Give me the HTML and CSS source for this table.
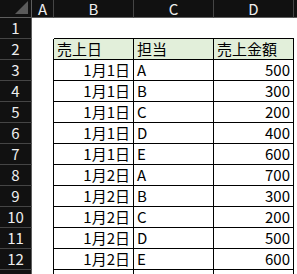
FILE: index.html
```html
<!DOCTYPE html>
<html lang="ja">
<head>
    <meta charset="UTF-8">
    <meta name="viewport" content="width=device-width, initial-scale=1.0">
    <title>売上</title>
    <link rel="stylesheet" href="styles.css">
</head>
<body>
    <div class="sheet">
        <!-- column headers -->
        <div class="corner">
            <svg width="14" height="14" viewBox="0 0 14 14"><polygon points="0,13 13,0 13,13" fill="#5a5a5a"/></svg>
        </div>
        <div class="col-head">A</div>
        <div class="col-head">B</div>
        <div class="col-head">C</div>
        <div class="col-head">D</div>
        <div class="col-head"></div>

        <!-- row 1 -->
        <div class="row-head">1</div>
        <div class="cell"></div>
        <div class="cell cap"></div>
        <div class="cell cap"></div>
        <div class="cell cap"></div>
        <div class="cell"></div>

        <!-- row 2: table header -->
        <div class="row-head">2</div>
        <div class="cell edge"></div>
        <div class="cell tb th">売上日</div>
        <div class="cell tb th">担当</div>
        <div class="cell tb th">売上金額</div>
        <div class="cell"></div>

        <div class="row-head">3</div>
        <div class="cell edge"></div>
        <div class="cell tb num">1月1日</div>
        <div class="cell tb">A</div>
        <div class="cell tb num">500</div>
        <div class="cell"></div>

        <div class="row-head">4</div>
        <div class="cell edge"></div>
        <div class="cell tb num">1月1日</div>
        <div class="cell tb">B</div>
        <div class="cell tb num">300</div>
        <div class="cell"></div>

        <div class="row-head">5</div>
        <div class="cell edge"></div>
        <div class="cell tb num">1月1日</div>
        <div class="cell tb">C</div>
        <div class="cell tb num">200</div>
        <div class="cell"></div>

        <div class="row-head">6</div>
        <div class="cell edge"></div>
        <div class="cell tb num">1月1日</div>
        <div class="cell tb">D</div>
        <div class="cell tb num">400</div>
        <div class="cell"></div>

        <div class="row-head">7</div>
        <div class="cell edge"></div>
        <div class="cell tb num">1月1日</div>
        <div class="cell tb">E</div>
        <div class="cell tb num">600</div>
        <div class="cell"></div>

        <div class="row-head">8</div>
        <div class="cell edge"></div>
        <div class="cell tb num">1月2日</div>
        <div class="cell tb">A</div>
        <div class="cell tb num">700</div>
        <div class="cell"></div>

        <div class="row-head">9</div>
        <div class="cell edge"></div>
        <div class="cell tb num">1月2日</div>
        <div class="cell tb">B</div>
        <div class="cell tb num">300</div>
        <div class="cell"></div>

        <div class="row-head">10</div>
        <div class="cell edge"></div>
        <div class="cell tb num">1月2日</div>
        <div class="cell tb">C</div>
        <div class="cell tb num">200</div>
        <div class="cell"></div>

        <div class="row-head">11</div>
        <div class="cell edge"></div>
        <div class="cell tb num">1月2日</div>
        <div class="cell tb">D</div>
        <div class="cell tb num">500</div>
        <div class="cell"></div>

        <div class="row-head">12</div>
        <div class="cell edge"></div>
        <div class="cell tb num">1月2日</div>
        <div class="cell tb">E</div>
        <div class="cell tb num">600</div>
        <div class="cell"></div>

        <div class="row-head">13</div>
        <div class="cell edge"></div>
        <div class="cell tb"></div>
        <div class="cell tb"></div>
        <div class="cell tb"></div>
        <div class="cell"></div>
    </div>
</body>
</html>
```

FILE: styles.css
```css
/* Sheet */
body {
    margin: 0;
    background: #fff;
    font-family: "Noto Sans CJK JP", "Noto Sans", sans-serif;
    font-size: 15px;
    color: #000;
    overflow: hidden;
}

.sheet {
    display: grid;
    grid-template-columns: 32px 22px 80px 80px 80px 1fr;
    grid-template-rows: 18px repeat(13, 21px);
}

.sheet > div {
    box-sizing: border-box;
}

/* Headers (dark theme) */
.corner {
    background: #111;
    border-right: 1px solid #5e5e5e;
    border-bottom: 1px solid #5e5e5e;
    display: flex;
    justify-content: flex-end;
    align-items: flex-end;
    padding: 0 2px 2px 0;
}

.corner svg {
    display: block;
}

.col-head {
    background: #111;
    color: #eee;
    border-right: 1px solid #454545;
    border-bottom: 1px solid #5e5e5e;
    text-align: center;
    line-height: 17px;
}

.row-head {
    background: #111;
    color: #eee;
    border-right: 1px solid #5e5e5e;
    border-bottom: 1px solid #454545;
    text-align: center;
    line-height: 20px;
}

/* Cells */
.cell {
    background: #fff;
    line-height: 20px;
    padding: 0 3px;
    white-space: nowrap;
    overflow: hidden;
}

.cell.cap {
    border-bottom: 1px solid #000;
}

.cell.edge {
    border-right: 1px solid #000;
}

.cell.tb {
    border-right: 1px solid #000;
    border-bottom: 1px solid #000;
}

.cell.th {
    background: #e2efda;
}

.cell.num {
    text-align: right;
}
```
